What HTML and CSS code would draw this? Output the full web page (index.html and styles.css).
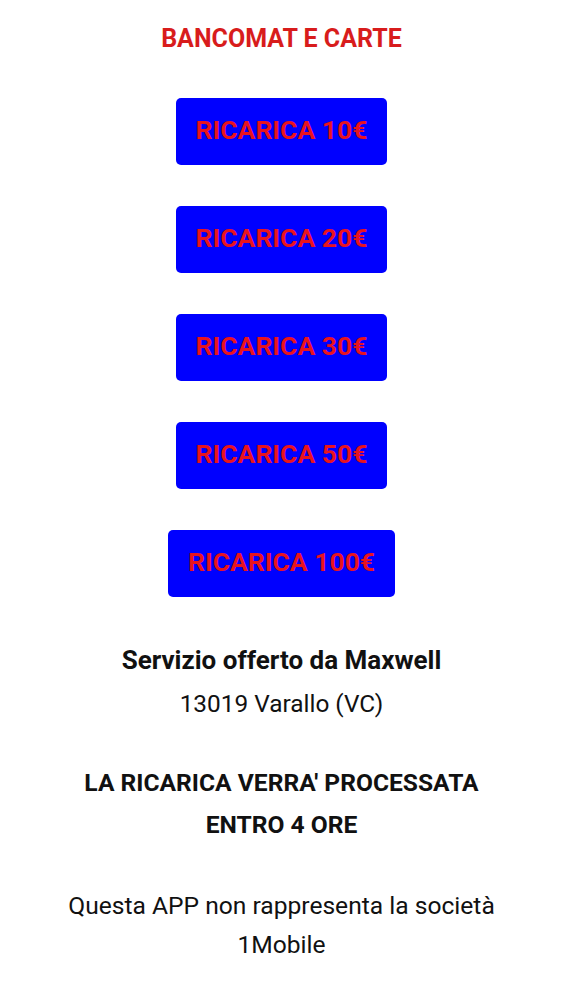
FILE: index.html
```html
<!DOCTYPE html>
<html lang="it">
<head>
<meta charset="utf-8">
<title>Bancomat e carte</title>
<link rel="stylesheet" href="styles.css">
</head>
<body>
<main class="page">
  <h1 class="title">BANCOMAT E CARTE</h1>
  <div class="buttons">
    <button class="btn">RICARICA 10€</button>
    <button class="btn">RICARICA 20€</button>
    <button class="btn">RICARICA 30€</button>
    <button class="btn">RICARICA 50€</button>
    <button class="btn">RICARICA 100€</button>
  </div>
  <section class="info">
    <p class="info-name">Servizio offerto da Maxwell</p>
    <p class="info-addr">13019 Varallo (VC)</p>
  </section>
  <section class="notice">
    <p>LA RICARICA VERRA' PROCESSATA<br>ENTRO 4 ORE</p>
  </section>
  <section class="disclaimer">
    <p>Questa APP non rappresenta la società<br>1Mobile</p>
  </section>
</main>
</body>
</html>
```
FILE: styles.css
```css
html, body {
  margin: 0;
  padding: 0;
  background: #ffffff;
}
body {
  font-family: Roboto, "Liberation Sans", sans-serif;
  color: #111111;
}
.page {
  display: flex;
  flex-direction: column;
  align-items: center;
  text-align: center;
}
.title {
  margin: 25px 0 0 0;
  font-size: 25px;
  line-height: 28px;
  font-weight: 700;
  color: #d81c1c;
}
.buttons {
  display: flex;
  flex-direction: column;
  align-items: center;
  gap: 41px;
  margin-top: 45px;
}
.btn {
  box-sizing: border-box;
  font-family: Roboto, "Liberation Sans", sans-serif;
  background: #0000ff;
  color: #e8141e;
  border: none;
  border-radius: 5px;
  font-size: 26.5px;
  font-weight: 700;
  line-height: 28px;
  height: 67px;
  padding: 0 20px 3px;
}
.info {
  margin-top: 43px;
  line-height: 41px;
}
.info p, .notice p, .disclaimer p {
  margin: 0;
}
.info-name {
  font-size: 26px;
  font-weight: 700;
}
.info-addr {
  font-size: 24.4px;
  padding-top: 2px;
}
.notice {
  margin-top: 38px;
  font-size: 24.6px;
  font-weight: 700;
  line-height: 42px;
}
.disclaimer {
  margin-top: 40px;
  font-size: 24.6px;
  line-height: 39px;
}
```
